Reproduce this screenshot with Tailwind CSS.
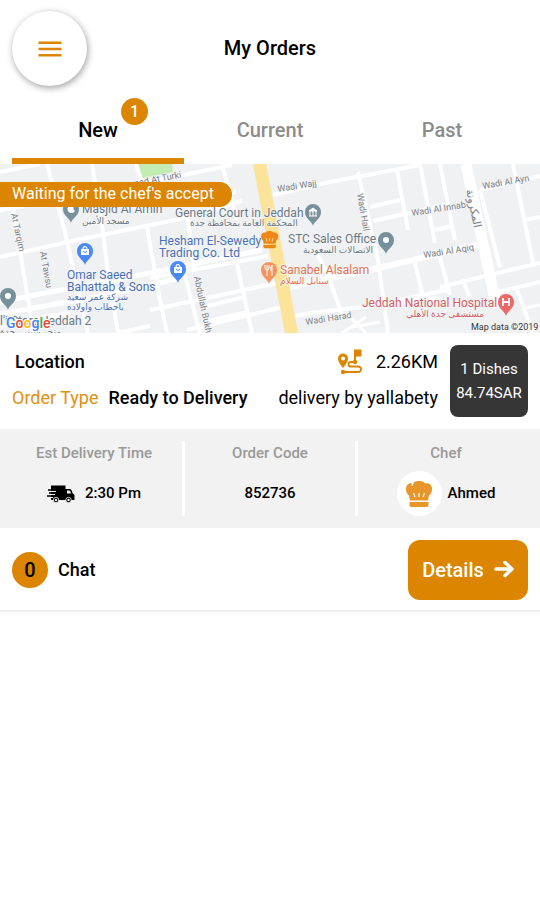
<!DOCTYPE html>
<html lang="en">
<head>
    <meta charset="UTF-8">
    <meta name="viewport" content="width=device-width, initial-scale=1.0">
    <title>My Orders</title>
    <script src="https://cdn.jsdelivr.net/npm/@tailwindcss/browser@4"></script>
</head>
<body class="bg-white text-black font-['Roboto','DejaVu_Sans',sans-serif] min-h-screen">
    <!-- Header -->
    <header class="grid grid-cols-[75px_1fr_75px] items-center px-3 pt-[11px] pb-[11px]">
        <button type="button" aria-label="Menu" class="w-[75px] h-[75px] rounded-full bg-white shadow-[1px_2px_7px_rgba(0,0,0,0.38)] flex items-center justify-center">
            <svg class="w-6 h-6 text-[#dc8500]" viewBox="0 0 24 24" fill="none" stroke="currentColor" stroke-width="2.6"><path d="M.5 5.700h23M.5 12h23M.5 18.300h23"></path></svg>
        </button>
        <h1 class="text-xl font-medium text-center pb-0.5">My Orders</h1>
    </header>

    <!-- Tabs -->
    <nav class="grid grid-cols-3 px-3 text-xl font-medium text-center">
        <a href="#new" class="relative h-[67px] pt-5 leading-[26px] border-b-6 border-[#dc8500]">
            New
            <span class="absolute left-[109px] top-px w-[27px] h-[27px] rounded-full bg-[#dc8500] text-white text-base leading-[27px]">1</span>
        </a>
        <a href="#current" class="h-[67px] pt-5 leading-[26px] text-[#8c8c8c]">Current</a>
        <a href="#past" class="h-[67px] pt-5 leading-[26px] text-[#8c8c8c]">Past</a>
    </nav>

    <main>
        <article class="border-b-2 border-[#f0f0f0]">
            <!-- Map -->
            <div class="relative">
                <svg class="block w-full h-[169px] bg-[#eff1f3]" viewBox="0 0 540 169" preserveAspectRatio="xMidYMid slice" role="img" aria-label="Map of Jeddah">
                    <defs>
                        <path id="pin" d="M0 13C-1 8-8 6-8-1A8 8 0 0 1 8-1C8 6 1 8 0 13Z"></path>
                        <g id="bag" fill="#fff"><path d="M-4-3h8v6h-8z"></path><path d="M-2-3a2 2.4 0 0 1 4 0" fill="none" stroke="#fff" stroke-width="1.2"></path><path d="M-2-1q2 3 4 0" fill="none" stroke="#4a8af4"></path></g>
                        <g id="hat">
                            <path d="M4 19.500L3 14.500C1 13 0 11 0 8C0 4 3 1.500 6.500 2.500C8 .5 11 0 13 0C16 0 18 .8 19.500 2.500C23 1.500 26 4 26 8C26 11 25 13 23 14.500L22 19.500Z"></path>
                            <path d="M3.500 21H22.500V24Q22.500 26 20.500 26H5.500Q3.500 26 3.500 24Z"></path>
                        </g>
                    </defs>
                    <path d="M138 0h34l1 8-31 6z" fill="#c3ecb2"></path>
                    <g fill="none" stroke="#fff" stroke-width="4">
                        <path d="M0 8L40 0M47 0L65 68L72 100L88 169M92 0L103 68L108 109L118 169M0 93L77 76L180 55L242 37M0 46L24 42M13 46L27 129L34 169M147 63L160 136L167 169M136 0L142 18"></path>
                        <path d="M140 20L183 11L232 1M222 0L237 56M228 30L236 28M187 45L194 104M150 114L268 92M150 146L277 119M118 169L150 162M187 166L283 143M237 100L252 169M183 104L200 169M203 143L245 133M208 157L248 148"></path>
                        <path d="M0 150L95 133L150 121L180 114M0 162L70 149M0 138L40 130L130 113M130 113L262 86" stroke-width="5"></path>
                        <path d="M273 31L330 18L420 1M358 8L378 96L388 169M397 6L408 66M420 0L435 79M440 0L455 76M480 26L500 103M370 43L400 36M373 57L408 49L450 40M480 26L540 12M513 0L533 99M525 56L540 53M435 66L453 62"></path>
                        <path d="M290 123L320 116L370 106L477 81" stroke-width="6"></path>
                        <path d="M440 123L540 99M380 140L447 126M493 129L540 118M415 99L423 133M440 93L450 131M463 116L470 134M317 90L327 109L343 153M517 126L533 169M290 153L310 149L440 134"></path>
                        <path d="M346 149L366 169M342 169L366 153M352 163L380 158M525 144L540 141" stroke-width="3"></path>
                        <path d="M466 0L496 140" stroke-width="11"></path>
                    </g>
                    <path d="M259-3L292 172" stroke="#fbe39a" stroke-width="13" fill="none"></path>

                    <g font-family="Roboto, 'DejaVu Sans', sans-serif" font-size="12" paint-order="stroke" stroke="#f5f7f8" stroke-width="1.5" stroke-linejoin="round">
                        <g fill="#7c8085" font-size="9">
                            <text transform="translate(132 23) rotate(-11)">mad At Turki</text>
                            <text transform="translate(278 28) rotate(-9)">Wadi Wajj</text>
                            <text transform="translate(483 25) rotate(-10)">Wadi Al Ayn</text>
                            <text transform="translate(412 52) rotate(-9)">Wadi Al Innab</text>
                            <text transform="translate(424 94) rotate(-9)">Wadi Al Aqiq</text>
                            <text transform="translate(306 161) rotate(-9)">Wadi Harad</text>
                            <text transform="translate(357 30) rotate(80)">Wadi Hail</text>
                            <text transform="translate(11 50) rotate(78)">At Tarqim</text>
                            <text transform="translate(40 88) rotate(80)">At Tawsu</text>
                            <text transform="translate(194 113) rotate(78)">Abdullah Bukha</text>
                            <text transform="translate(466 26) rotate(78)" font-size="11">المكرونة</text>
                        </g>
                        <g fill="#6b7782">
                            <text x="82" y="49">Masjid Al Amin</text>
                            <text x="82" y="60" font-size="9">مسجد الأمين</text>
                            <text x="175" y="53">General Court in Jeddah</text>
                            <text x="190" y="62" font-size="9">المحكمة العامة بمحافظة جدة</text>
                            <text x="288" y="79">STC Sales Office</text>
                            <text x="303" y="89" font-size="9">الاتصالات السعودية</text>
                            <text x="0" y="161">l'i Store Jeddah 2</text>
                            <text x="0" y="171" font-size="9">متجر شينيي جدة</text>
                        </g>
                        <g fill="#4a70b5">
                            <text x="159" y="81">Hesham El-Sewedy</text>
                            <text x="159" y="93">Trading Co. Ltd</text>
                            <text x="67" y="115">Omar Saeed</text>
                            <text x="67" y="127">Bahattab &amp; Sons</text>
                            <text x="67" y="136" font-size="9">شركة عمر سعيد</text>
                            <text x="67" y="146" font-size="9">باحطاب واولاده</text>
                        </g>
                        <g fill="#e27453">
                            <text x="280" y="110">Sanabel Alsalam</text>
                            <text x="280" y="120" font-size="9">سنابل السلام</text>
                        </g>
                        <g fill="#d35f65">
                            <text x="362" y="143">Jeddah National Hospital</text>
                            <text x="406" y="153" font-size="9">مستشفى جدة الأهلي</text>
                        </g>
                        <text x="471" y="166" font-size="9" fill="#333">Map data ©2019</text>
                    </g>

                    <g transform="translate(71 46)"><use href="#pin" fill="#78909c"></use><path d="M3-4a4 4 0 1 0 1 5a4 4 0 0 1-1-5z" fill="#fff"></path></g>
                    <g transform="translate(85 88)"><use href="#pin" fill="#4a8af4"></use><use href="#bag"></use></g>
                    <g transform="translate(178 106)"><use href="#pin" fill="#4a8af4"></use><use href="#bag"></use></g>
                    <g transform="translate(8 133)"><use href="#pin" fill="#78909c"></use><circle cy="-1" r="3" fill="#fff"></circle></g>
                    <g transform="translate(386 77)"><use href="#pin" fill="#78909c"></use><circle cy="-1" r="3" fill="#fff"></circle></g>
                    <g transform="translate(313 49)"><use href="#pin" fill="#78909c"></use><path d="M-4-2L0-5L4-2ZM-4 3h8M-3-2v5M0-2v5M3-2v5" fill="#fff" stroke="#fff"></path></g>
                    <g transform="translate(269 107)"><use href="#pin" fill="#f6935e"></use><path d="M-2-6v11M-4-6v3q0 2 2 2t2-2v-3M3 5v-11q-2 2-1 6h1" fill="none" stroke="#fff"></path></g>
                    <g transform="translate(506 139)"><use href="#pin" fill="#ee6868"></use><path d="M-3-5v8M3-5v8M-3-1h6" fill="none" stroke="#fff" stroke-width="1.8"></path></g>
                    <g transform="translate(261 67) scale(.66)" fill="#ee8718"><use href="#hat"></use><path d="M8 11l1 5M13 11v5M18 11l-1 5" stroke="#fbe39a" stroke-width="1.4"></path></g>

                    <text x="6" y="164" font-family="Roboto, sans-serif" font-size="14" font-weight="500" paint-order="stroke" stroke="#fff" stroke-width="2"><tspan fill="#4285f4">G</tspan><tspan fill="#ea4335">o</tspan><tspan fill="#fbbc05">o</tspan><tspan fill="#4285f4">g</tspan><tspan fill="#34a853">l</tspan><tspan fill="#ea4335">e</tspan></text>
                </svg>
                <p class="absolute left-0 top-[18px] h-[25px] pl-3 pr-[18px] rounded-r-full bg-[#dc8500] text-white text-base leading-6">Waiting for the chef's accept</p>
            </div>

            <!-- Location and price -->
            <section class="flex gap-3 p-3">
                <div class="flex-1 flex flex-col text-lg leading-[34px] gap-0.5">
                    <div class="flex items-center justify-between">
                        <h2 class="font-medium pl-[3px]">Location</h2>
                        <p class="flex items-center gap-3">
                            <svg class="w-7 h-7" viewBox="0 0 28 28" fill="none" stroke="#dc8500" stroke-width="1.800">
                                <path d="M7 20Q2 14 2 10.500A5 5 0 0 1 12 10.500Q12 14 7 20ZM7 8.500A2 2 0 1 0 7 12.500A2 2 0 1 0 7 8.500Z" fill="#dc8500" fill-rule="evenodd" stroke="none"></path>
                                <path d="M18 1.500H25.500V8.500H20.500L18 11Z" fill="#dc8500" stroke="none"></path>
                                <path d="M19 8V13M19 14H15Q12.500 14 12.500 16.200Q12.500 18.500 15 18.500H22Q25 18.500 25 21.200Q25 24 22 24H7"></path>
                                <circle cx="19" cy="14" r="2.200" fill="#dc8500" stroke="none"></circle>
                                <circle cx="7" cy="24" r="2.200" fill="#dc8500" stroke="none"></circle>
                            </svg>
                            2.26KM
                        </p>
                    </div>
                    <div class="flex items-center justify-between">
                        <p><span class="text-[#e09112] mr-[10px]">Order Type</span><strong class="font-medium">Ready to Delivery</strong></p>
                        <p>delivery by yallabety</p>
                    </div>
                </div>
                <div class="w-[78px] h-[72px] rounded-lg bg-[#363636] text-white text-[15px] leading-6 text-center py-3">
                    <p>1 Dishes</p>
                    <p>84.74SAR</p>
                </div>
            </section>

            <!-- Order details -->
            <dl class="grid grid-cols-3 bg-[#f2f2f2] px-[6px] py-3 text-[15px] font-medium text-center">
                <div class="flex flex-col h-[75px]">
                    <dt class="text-[#999] leading-6">Est Delivery Time</dt>
                    <dd class="flex-1 flex items-center justify-center gap-[10px] pt-[6px]">
                        <svg class="w-7 h-[18px]" viewBox="0 0 28 18">
                            <path d="M4 .5H18.500V4H23Q24.500 4 25.500 8L27.500 10V15H4Z"></path>
                            <path d="M20 5.500H22.500Q23.500 6 24 8.500H20Z" fill="#f2f2f2"></path>
                            <path d="M0 3H3M4 6.500H9M4 9.500H8M3 12.500H6" stroke="#f2f2f2" stroke-width="1.200"></path>
                            <path d="M1 5H10M2 8H10M0 11H9" stroke="#000" stroke-width="1.400"></path>
                            <circle cx="9" cy="15" r="2.700" stroke="#f2f2f2" stroke-width=".8"></circle>
                            <circle cx="21.500" cy="15" r="2.700" stroke="#f2f2f2" stroke-width=".8"></circle>
                            <circle cx="9" cy="15" r="1.200" fill="#f2f2f2"></circle>
                            <circle cx="21.500" cy="15" r="1.200" fill="#f2f2f2"></circle>
                        </svg>
                        2:30 Pm
                    </dd>
                </div>
                <div class="flex flex-col h-[75px] border-x-3 border-white">
                    <dt class="text-[#999] leading-6">Order Code</dt>
                    <dd class="flex-1 flex items-center justify-center pt-[6px]">852736</dd>
                </div>
                <div class="flex flex-col h-[75px]">
                    <dt class="text-[#999] leading-6">Chef</dt>
                    <dd class="flex-1 flex items-center justify-center gap-[6px] pt-[6px]">
                        <span class="w-[45px] h-[45px] rounded-full bg-white flex items-center justify-center">
                            <svg class="w-[26px] h-[26px]" viewBox="0 0 26 26" fill="#e8952a">
                                <path d="M4 19.500L3 14.500C1 13 0 11 0 8C0 4 3 1.500 6.500 2.500C8 .5 11 0 13 0C16 0 18 .8 19.500 2.500C23 1.500 26 4 26 8C26 11 25 13 23 14.500L22 19.500Z"></path>
                                <path d="M3.500 21H22.500V24Q22.500 26 20.500 26H5.500Q3.500 26 3.500 24Z"></path>
                                <path d="M7.500 12l1.500 4M13 12v4M18.500 12l-1.500 4M7.500 1.500Q6 3 6 5" fill="none" stroke="#fff" stroke-width="1.200"></path>
                            </svg>
                        </span>
                        Ahmed
                    </dd>
                </div>
            </dl>

            <!-- Actions -->
            <footer class="flex items-center justify-between p-3 pb-[10px]">
                <a href="#chat" class="flex items-center gap-[10px] text-lg font-medium">
                    <span class="w-9 h-9 rounded-full bg-[#dc8500] text-xl leading-9 text-center">0</span>
                    Chat
                </a>
                <button type="button" class="w-[120px] h-[60px] rounded-xl bg-[#dc8500] text-white text-xl font-medium flex items-center justify-center gap-[10px]">
                    Details
                    <svg class="w-5 h-5" viewBox="0 0 20 20" fill="none" stroke="currentColor" stroke-width="3.500" stroke-linecap="round" stroke-linejoin="round"><path d="M2 9H17.500M11 2.500L18 9L11 15.500"></path></svg>
                </button>
            </footer>
        </article>
    </main>
</body>
</html>
